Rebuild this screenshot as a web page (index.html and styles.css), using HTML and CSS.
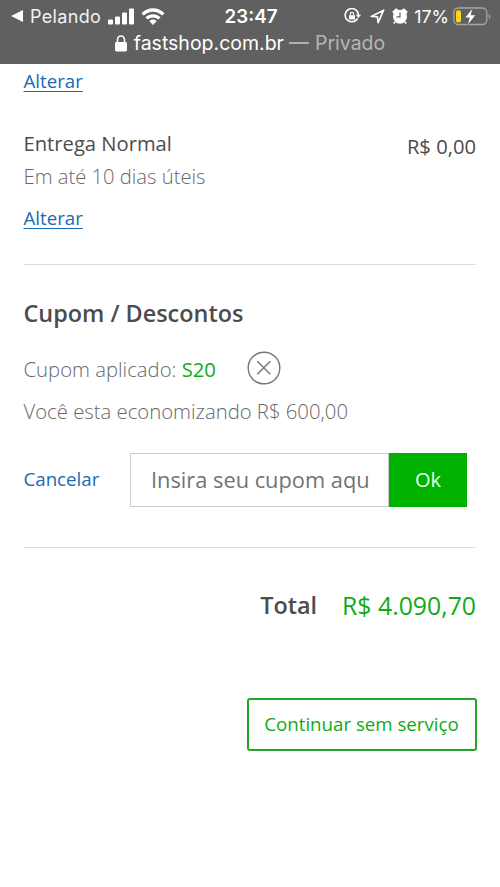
FILE: index.html
```html
<!DOCTYPE html>
<html lang="pt-BR">
<head>
<meta charset="utf-8">
<meta name="viewport" content="width=device-width, initial-scale=1">
<title>Fast Shop</title>
<link rel="stylesheet" href="styles.css">
</head>
<body>
<header class="chrome">
  <div class="status">
    <div class="status-left">
      <svg class="back" width="12" height="12" viewBox="0 0 12 12"><path d="M0 6 12 0v12z"/></svg>
      <span class="app">Pelando</span>
      <svg class="signal" width="27" height="17" viewBox="0 0 27 17"><rect x="0" y="11.5" width="5" height="5" rx="1"/><rect x="7" y="8.5" width="5" height="8" rx="1"/><rect x="14" y="4.5" width="5" height="12" rx="1"/><rect x="21" y="0.5" width="5" height="16" rx="1"/></svg>
      <svg class="wifi" width="24" height="17" viewBox="0 0 24 17"><path d="M0.5 5.3C7-1.3 17-1.3 23.5 5.3L21.3 7.6C16 2.4 8 2.4 2.7 7.6zM4.4 9.3c4.3-4.2 10.9-4.2 15.2 0l-2.3 2.3c-3-2.9-7.6-2.9-10.6 0zM8.2 13.1c2.1-2.1 5.5-2.1 7.6 0L12 17z"/></svg>
    </div>
    <span class="clock">23:47</span>
    <div class="status-right">
      <svg width="17" height="16" viewBox="0 0 17 16"><path d="M13.5 10.5A6.6 6.6 0 1 1 14.4 7" fill="none" stroke="#fff" stroke-width="1.6"/><path d="M11.8 6.7H17l-2.6 3.5z"/><rect x="5" y="7.2" width="6" height="4.3" rx=".6"/><path d="M6.3 7.4V6a1.7 1.7 0 0 1 3.4 0v1.4" fill="none" stroke="#fff" stroke-width="1.2"/></svg>
      <svg class="arrow" width="15" height="15" viewBox="0 0 15 15"><path d="M1.2 7.5 13.7 1.2 8.1 13.7 7.4 7.8z" fill="none" stroke="#fff" stroke-width="1.6" stroke-linejoin="round"/></svg>
      <svg class="alarm" width="16" height="17" viewBox="0 0 16 17"><circle cx="8" cy="8.7" r="7"/><path d="M2 4.1 4.4 2M14 4.1 11.6 2" stroke="#fff" stroke-width="3" stroke-linecap="round"/><path d="M3 14 1.9 15.6M13 14l1.1 1.6" stroke="#fff" stroke-width="1.8"/><path d="M8 4.5v4.4H4.5" fill="none" stroke="#606060" stroke-width="1.2"/></svg>
      <span class="percent">17%</span>
      <svg class="battery" width="38" height="19" viewBox="0 0 38 19"><rect x=".8" y="1" width="33" height="16.5" rx="4.5" fill="none" stroke="#a5a5a5" stroke-width="1.3"/><path d="M35.8 7v5c2-.8 2-4.2 0-5z" fill="#a5a5a5"/><rect x="3" y="3.2" width="5" height="12.2" rx="2" fill="#fbd51c"/><path d="M19.4 1.8 12.4 10.5h4.4L15 17.2l7.3-9h-4.7z" stroke="#606060" stroke-width="2" paint-order="stroke"/></svg>
    </div>
  </div>
  <div class="address">
    <svg width="12" height="17" viewBox="0 0 12 17"><rect x="0" y="7" width="12" height="9.5" rx="1.4"/><path d="M2.5 8V4.8a3.5 3.8 0 0 1 7 0V8" fill="none" stroke="#fff" stroke-width="1.6"/></svg>
    <span class="domain">fastshop.com.br</span>
    <span class="dash"></span>
    <span class="private">Privado</span>
  </div>
</header>
<main>
  <section class="delivery">
    <a class="link" href="#">Alterar</a>
    <div class="shipping">
      <div>
        <p class="name">Entrega Normal</p>
        <p class="time">Em até 10 dias úteis</p>
      </div>
      <span class="price">R$ 0,00</span>
    </div>
    <a class="link" href="#">Alterar</a>
  </section>
  <section class="coupon">
    <h2>Cupom / Descontos</h2>
    <div class="applied">
      <p><span class="applied-label">Cupom aplicado:</span> <span class="code">S20</span></p>
      <svg class="remove" width="34" height="34" viewBox="0 0 34 34"><circle cx="17" cy="17" r="15.8"/><path d="M10.3 10.3 23.3 23.3M23.3 10.3 10.3 23.3"/></svg>
    </div>
    <p class="saving">Você esta economizando R$ 600,00</p>
    <div class="form">
      <a class="cancel" href="#">Cancelar</a>
      <div class="field">Insira seu cupom aqu</div>
      <div class="ok">Ok</div>
    </div>
  </section>
  <div class="total"><span class="total-label">Total</span><span class="total-value">R$ 4.090,70</span></div>
  <div class="actions"><a class="continue" href="#"><span>Continuar sem serviço</span></a></div>
</main>
</body>
</html>
```
FILE: styles.css
```css
* { box-sizing: border-box; }
body { margin: 0; background: #fff; color: #4c4c4e; font-family: "Open Sans", sans-serif; font-size: 18.7px; line-height: 28px; }
p, h2 { margin: 0; white-space: nowrap; }
svg { display: block; flex: none; }
span { white-space: nowrap; }

.chrome { height: 64px; background: #606060; color: #fff; font-family: Inter, sans-serif; }
.chrome svg { fill: #fff; }
.status { height: 32px; display: grid; grid-template-columns: 1fr auto 1fr; align-items: center; padding: 0 9px 0 11px; }
.status-left, .status-right { display: flex; align-items: center; }
.status-right { justify-content: flex-end; }
.app { margin-left: 7px; padding-top: 1px; font-size: 18px; letter-spacing: .35px; color: #f2f2f2; }
.signal { margin-left: 6.5px; }
.wifi { margin-left: 6px; }
.clock { padding-top: 1px; font-size: 18.8px; font-weight: 600; }
.arrow { margin-left: 9px; }
.alarm { margin-left: 7px; }
.percent { margin-left: 6px; padding-top: 1px; font-size: 17.8px; }
.battery { margin-left: 4px; }
.address { height: 22px; display: flex; align-items: center; justify-content: center; font-size: 19.5px; }
.domain { margin-left: 7px; }
.dash { width: 20px; height: 1.5px; margin: 0 5.5px; background: #b0b0b0; }
.private { color: #b5b5b5; }

main { padding: 3px 24px 0 23.5px; }
.link { display: block; width: max-content; color: #1a69b3; text-decoration-thickness: 1px; text-underline-offset: 3px; }
.delivery { height: 198px; border-bottom: 1px solid #dedede; }
.shipping { display: flex; justify-content: space-between; margin: 34px 0 14px; }
.name { font-size: 20.2px; }
.time { margin-top: 5px; font-size: 20.2px; font-weight: 300; color: #68686a; }
.price { margin-top: 3px; font-size: 20.2px; }

.coupon { height: 283px; padding-top: 32px; border-bottom: 1px solid #dedede; }
h2 { font-size: 23.4px; font-weight: 600; line-height: 32px; }
.applied { display: flex; align-items: center; gap: 31px; margin-top: 21px; height: 36px; }
.applied p { padding-top: 1px; }
.applied p, .saving { font-size: 20.3px; }
.applied-label, .saving { font-weight: 300; color: #68686a; }
.code { color: #10ab16; }
.remove { fill: none; stroke: #77777a; stroke-width: 1.4; }
.saving { margin-top: 11px; }
.form { display: flex; align-items: center; height: 54px; margin-top: 28px; }
.cancel { width: 106.5px; flex: none; padding-bottom: 2px; color: #1a69b3; text-decoration: none; }
.field { width: 259px; height: 54px; padding-left: 20px; border: 1px solid #c9cdcd; font-size: 21.8px; line-height: 51px; color: #707478; white-space: nowrap; }
.ok { width: 78px; height: 54px; background: #00b200; color: #e7ffe7; font-size: 20px; line-height: 54px; text-align: center; }

.total { display: flex; justify-content: flex-end; align-items: center; gap: 25px; height: 32px; margin-top: 41px; }
.total-label { font-size: 23.4px; font-weight: 600; }
.total-value { font-size: 24.8px; color: #10ab16; }
.actions { display: flex; justify-content: flex-end; margin: 77px -0.5px 0 0; }
.continue { display: flex; align-items: center; justify-content: center; width: 230px; height: 53px; padding-bottom: 1px; border: 2px solid #22a722; border-radius: 3px; color: #10ab16; text-decoration: none; }
```
